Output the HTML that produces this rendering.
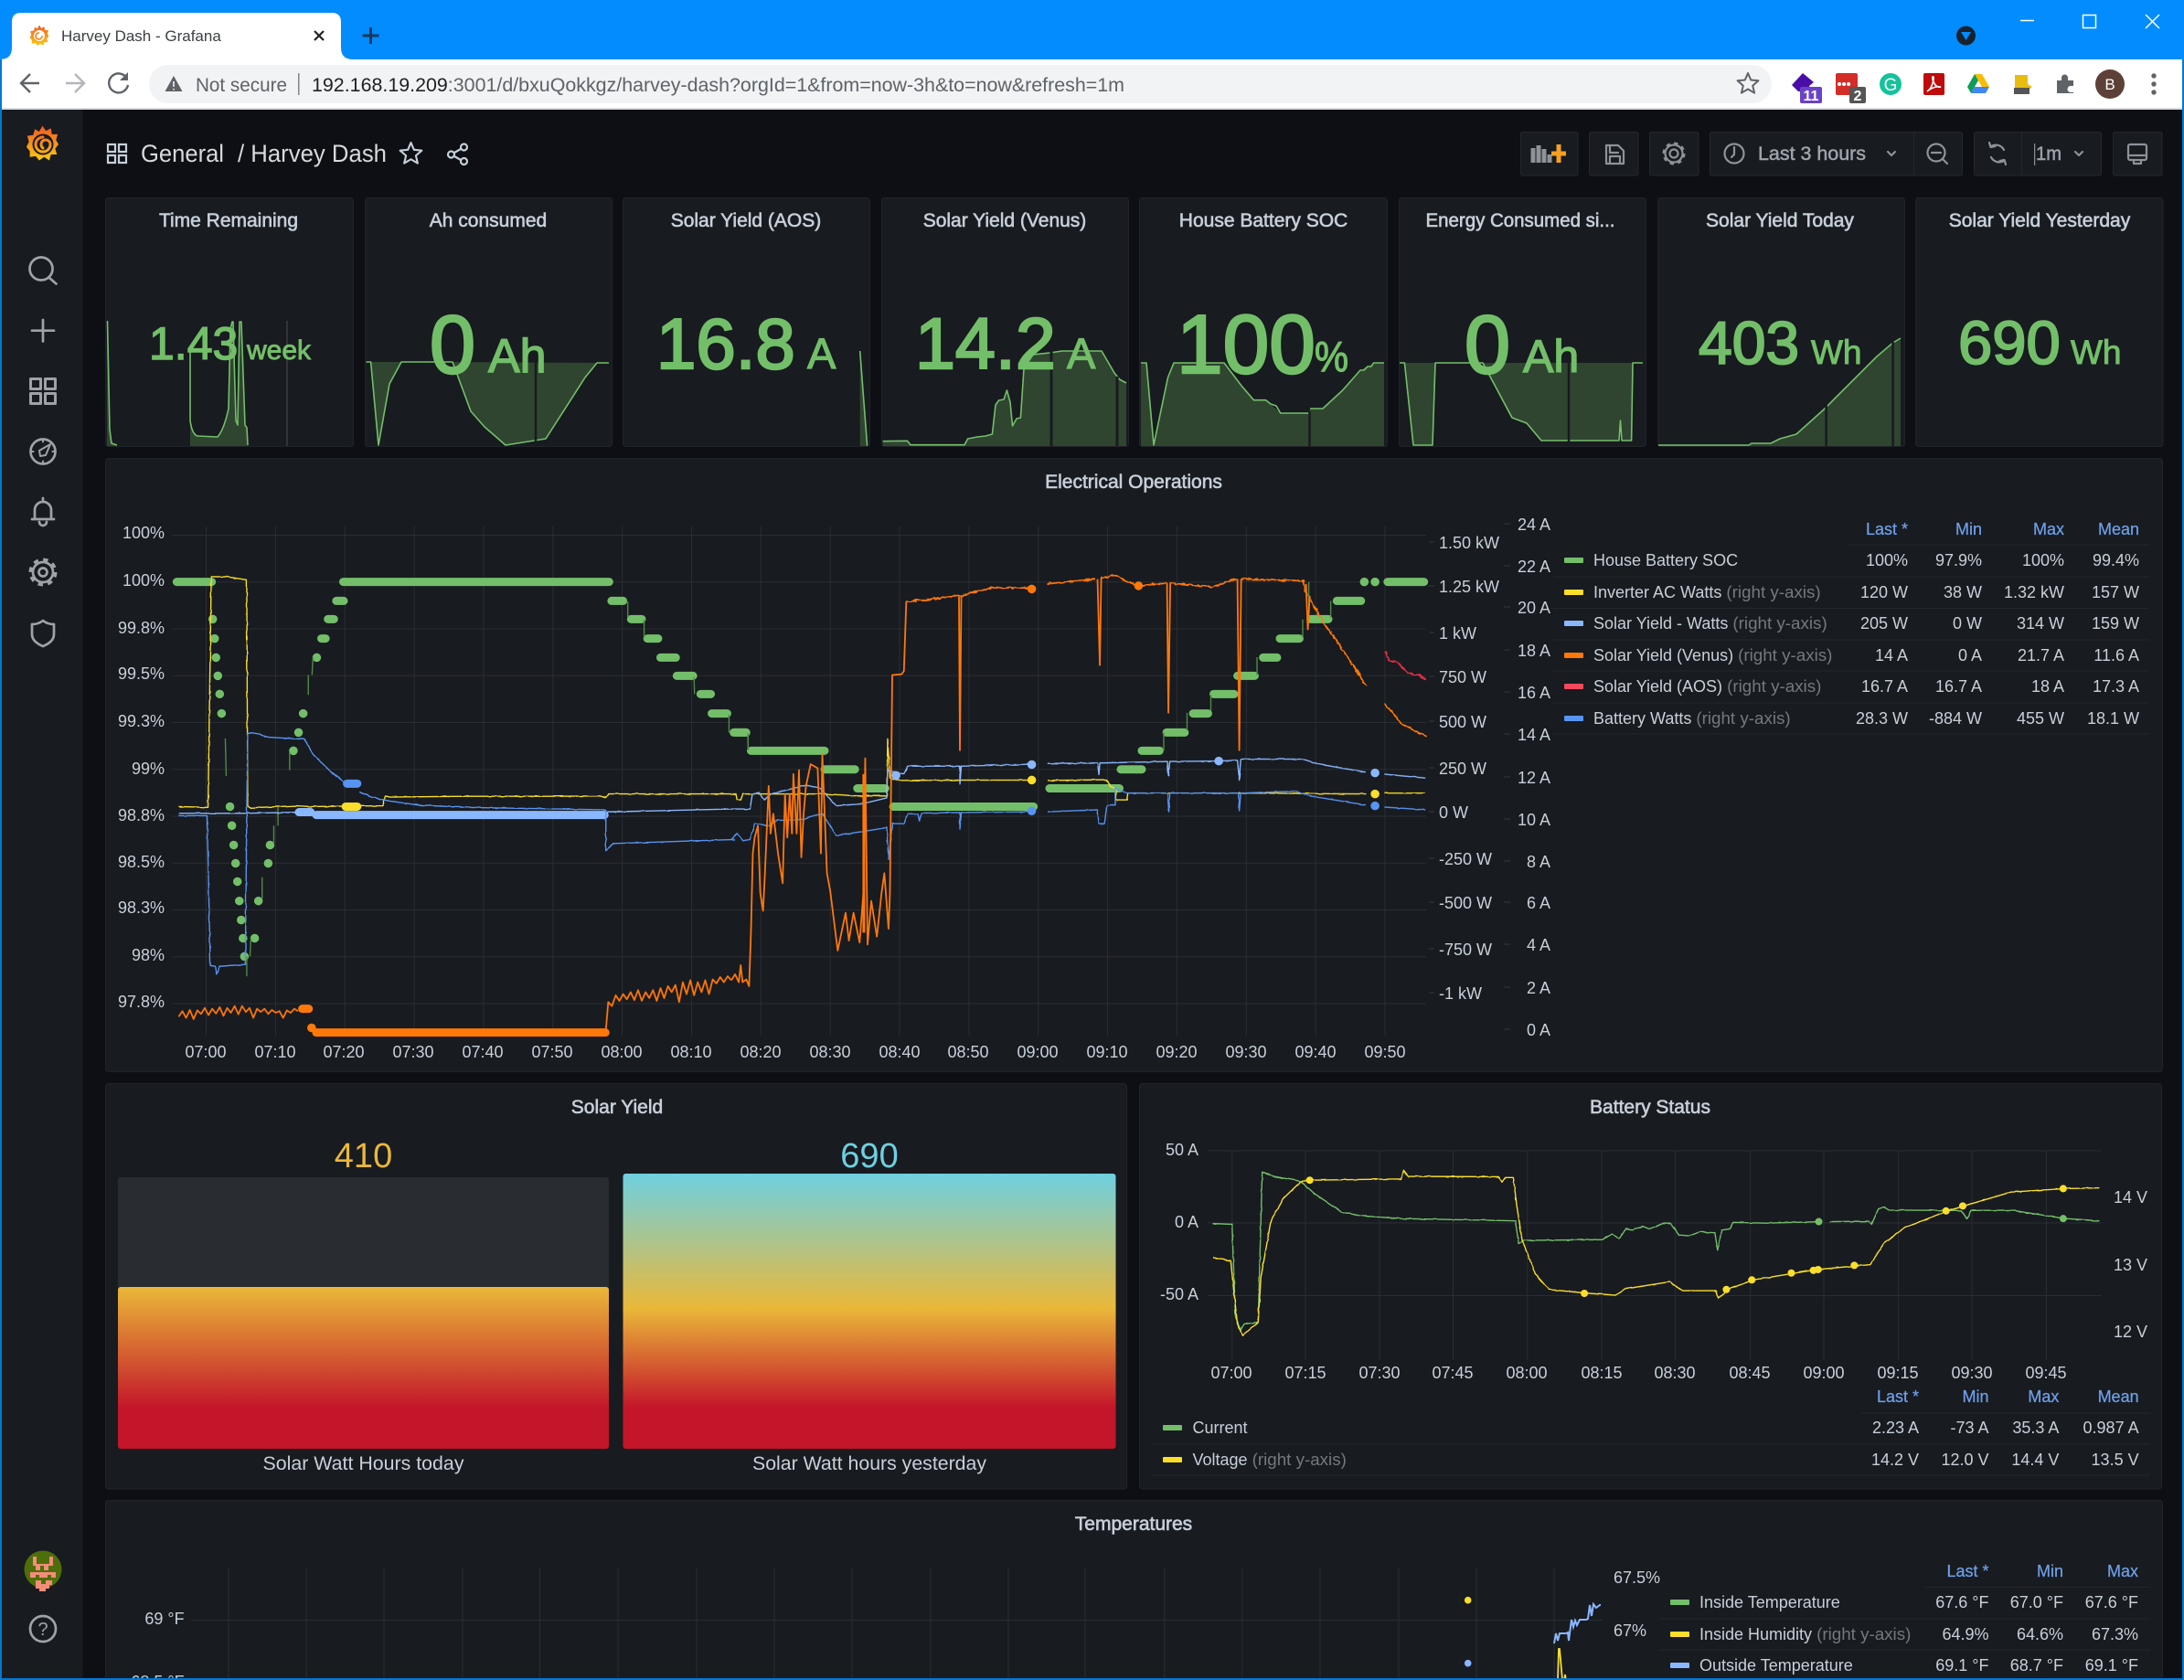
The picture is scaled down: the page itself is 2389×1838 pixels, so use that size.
<!DOCTYPE html>
<html><head><meta charset="utf-8"><title>Harvey Dash - Grafana</title>
<style>
html,body{margin:0;padding:0;background:#0d0f14;overflow:hidden}
svg{display:block;font-family:"Liberation Sans",sans-serif}
text{fill:#c7d0d9;font-size:18px}
.t{font-size:21px;text-anchor:middle;stroke:#c7d0d9;stroke-width:.6px}
.e{text-anchor:end}.m{text-anchor:middle}
.h{fill:#6e9fe8;text-anchor:end;font-size:18px;stroke:#6e9fe8;stroke-width:.25px}
.g{fill:#73797f;font-size:18.8px}
.s{fill:#73bf69;stroke:#73bf69}
.p{fill:#181b20;stroke:#202328;stroke-width:1}
.n{vector-effect:non-scaling-stroke;fill:none;stroke-linejoin:round;stroke-width:1.4}
.o{vector-effect:non-scaling-stroke;fill:none;stroke-linejoin:round;stroke-width:1.8}
.b{vector-effect:non-scaling-stroke;fill:none;stroke-linecap:round;stroke-width:9}
.d{vector-effect:non-scaling-stroke;fill:none;stroke-linecap:round;stroke-width:9.5}
.sp{fill:none;stroke:#73bf69;stroke-width:1.6;stroke-linejoin:round}
.fa{fill:#2f4530;stroke:none}
.ic{fill:none;stroke:#9fa3a9;stroke-width:2.7;stroke-linecap:round;stroke-linejoin:round}
.tb{fill:none;stroke:#8e9299;stroke-width:2.2;stroke-linecap:round;stroke-linejoin:round}
.bt{fill:#181b20;stroke:#24272c;stroke-width:1}
</style></head><body>
<svg width="2389" height="1838" viewBox="0 0 2389 1838" xmlns="http://www.w3.org/2000/svg">
<defs>
<linearGradient id="lg" x1="0" y1="0" x2="0" y2="1"><stop offset="0" stop-color="#f05a28"/><stop offset="1" stop-color="#fbca0a"/></linearGradient>
<linearGradient id="g1" gradientUnits="userSpaceOnUse" x1="0" y1="1408" x2="0" y2="1585"><stop offset="0" stop-color="#eab839"/><stop offset=".75" stop-color="#c4162a"/><stop offset="1" stop-color="#c4162a"/></linearGradient>
<linearGradient id="g2" gradientUnits="userSpaceOnUse" x1="0" y1="1284" x2="0" y2="1585"><stop offset="0" stop-color="#6ed0e0"/><stop offset=".49" stop-color="#eab839"/><stop offset=".85" stop-color="#c4162a"/><stop offset="1" stop-color="#c4162a"/></linearGradient>
<linearGradient id="lg2" gradientUnits="userSpaceOnUse" x1="0" y1="140" x2="0" y2="176"><stop offset="0" stop-color="#f05a28"/><stop offset="1" stop-color="#fbca0a"/></linearGradient>
<filter id="j" filterUnits="userSpaceOnUse" x="0" y="0" width="2389" height="1838" color-interpolation-filters="sRGB"><feTurbulence type="fractalNoise" baseFrequency=".2" numOctaves="2" seed="3" result="r"/><feDisplacementMap in="SourceGraphic" in2="r" scale="4" xChannelSelector="R" yChannelSelector="G"/></filter>
<filter id="k" filterUnits="userSpaceOnUse" x="0" y="0" width="2389" height="1838" color-interpolation-filters="sRGB"><feTurbulence type="fractalNoise" baseFrequency=".15" numOctaves="1" seed="8" result="r"/><feDisplacementMap in="SourceGraphic" in2="r" scale="2" xChannelSelector="R" yChannelSelector="G"/></filter>
<symbol id="logo" viewBox="-20 -22 40 44" overflow="visible">
<path fill="url(#lg)" d="M0-21 L4-15 L10-18 L11-11 L18-11 L16-4 L19 1 L15 6 L17 13 L10 13 L8 20 L2 16 L-4 20 L-8 15 L-15 16 L-15 9 L-19 4 L-16-2 L-18-9 L-11-10 L-9-17 L-4-14Z"/>
</symbol>
<symbol id="star" viewBox="-13 -13 26 26"><polygon points="0,-12 3.2,-4.5 11.4,-3.7 5.2,1.7 7.1,9.7 0,5.5 -7.1,9.7 -5.2,1.7 -11.4,-3.7 -3.2,-4.5" fill="none" stroke="currentColor" stroke-width="2" stroke-linejoin="round"/></symbol>
</defs>

<rect width="2389" height="1838" fill="#0d0f14"/>

<!-- browser chrome -->
<rect width="2389" height="65" fill="#028cfe"/>
<rect y="65" width="2389" height="55" fill="#fff"/>
<rect y="118" width="2389" height="2" fill="#d8dadd"/>
<path d="M0 65Q13 65 13 52V24Q13 14 23 14H363Q373 14 373 24V52Q373 65 386 65Z" fill="#fff"/>
<use href="#logo" x="32" y="27" width="22" height="24"/>
<circle cx="43" cy="39" r="6" fill="#fff"/><path d="M43 36a3.500 3.500 0 1 0 3 3" fill="none" stroke="#f58220" stroke-width="1.600"/>
<text x="67" y="45" style="font-size:17px;fill:#3c4043">Harvey Dash - Grafana</text>
<path d="M344 34l10 10M354 34l-10 10" stroke="#202124" stroke-width="2.2" fill="none"/>
<path d="M405.500 30v18M396.500 39h18" stroke="#17375a" stroke-width="3" fill="none"/>
<circle cx="2150.500" cy="39" r="10.500" fill="#17222f"/><path d="M2145 35h11l-5.500 9z" fill="#028cfe"/>
<path d="M2210 22.500h15" stroke="#fff" stroke-width="1.500"/>
<rect x="2278.500" y="16.500" width="14" height="14" fill="none" stroke="#fff" stroke-width="1.500"/>
<path d="M2347 16l15 15M2362 16l-15 15" stroke="#fff" stroke-width="1.500"/>

<path d="M43 91H24M33 81l-10 10l10 10" fill="none" stroke="#5f6368" stroke-width="2.400"/>
<path d="M72 91h19M82 81l10 10l-10 10" fill="none" stroke="#b3b6ba" stroke-width="2.400"/>
<path d="M139 86a10.500 10.500 0 1 0 1 7" fill="none" stroke="#5f6368" stroke-width="2.400"/><path d="M140 79v9h-9z" fill="#5f6368"/>
<rect x="163" y="71" width="1775" height="42" rx="21" fill="#f1f3f4"/>
<path d="M190 83l9.500 17h-19z" fill="#5f6368"/><path d="M190 89v6M190 97v1.500" stroke="#f1f3f4" stroke-width="1.600"/>
<text x="214" y="100" textLength="100" lengthAdjust="spacingAndGlyphs" style="font-size:21px;fill:#5f6368">Not secure</text>
<rect x="326" y="80" width="1.500" height="24" fill="#80868b"/>
<text x="341" y="100" textLength="889" lengthAdjust="spacingAndGlyphs" style="font-size:21px;fill:#5f6368"><tspan style="fill:#202124">192.168.19.209</tspan>:3001/d/bxuQokkgz/harvey-dash?orgId=1&amp;from=now-3h&amp;to=now&amp;refresh=1m</text>
<use href="#star" x="1899" y="79" width="26" height="26" style="color:#5f6368"/>

<!-- extensions -->
<path d="M1972 80l12 10l-5 4l2 6h-14l-7-7z" fill="#4a0ea8"/>
<rect x="1969" y="95" width="24" height="18" rx="2" fill="#6a42c8"/><text x="1981" y="110" class="m" style="font-size:16px;fill:#fff;font-weight:bold">11</text>
<rect x="2008" y="80" width="24" height="24" rx="2" fill="#d32d27"/><path d="M2012 92h.1M2017 92h.1M2022 92h.1" stroke="#fff" stroke-width="4" stroke-linecap="round"/>
<rect x="2023" y="95" width="18" height="18" rx="2" fill="#555"/><text x="2032" y="110" class="m" style="font-size:16px;fill:#fff;font-weight:bold">2</text>
<circle cx="2068" cy="92" r="12" fill="#15c39a"/><text x="2068" y="99" class="m" style="font-size:19px;fill:#fff">G</text>
<rect x="2104" y="80" width="23" height="24" rx="2" fill="#c00b0b"/><path d="M2108 100q5-3 7-13q.5-4-1-3q-1 3 3 9q3 3 6 2q-8-1-15 5z" fill="none" stroke="#fff" stroke-width="1.600"/>
<path d="M2160 81h8l8 14h-8z" fill="#fbbc04"/><path d="M2160 81l-8 14l4 7l8-14z" fill="#0f9d58"/><path d="M2156 102h16l4-7h-16z" fill="#4285f4"/>
<path d="M2204 82h14v10l5 3l-8 6h-12l1-6z" fill="#e8bd10"/><rect x="2203" y="96" width="17" height="7" fill="#555"/>
<path d="M2250 88h5v-3a3.500 3.500 0 0 1 7 0v3h6v6h-3a3.500 3.500 0 0 0 0 7h3v1h-18z" fill="#5f6368"/>
<circle cx="2308" cy="92" r="16" fill="#5d4037"/><text x="2308" y="98" class="m" style="font-size:17px;fill:#fff">B</text>
<circle cx="2356" cy="83" r="2.700" fill="#5f6368"/><circle cx="2356" cy="92" r="2.700" fill="#5f6368"/><circle cx="2356" cy="101" r="2.700" fill="#5f6368"/>

<!-- sidebar -->
<rect x="2" y="120" width="88.500" height="1718" fill="#181b20"/>
<use href="#logo" x="28" y="136" width="37" height="42"/>
<circle cx="47" cy="158" r="11.500" fill="#181b20"/>
<path d="M47 150a8 8 0 1 0 8 8a5 5 0 1 0-8 4" fill="none" stroke="url(#lg2)" stroke-width="3" stroke-linecap="round"/>
<g class="ic">
<circle cx="45" cy="294" r="12.500"/><path d="M54 304l7.500 6.500"/>
<path d="M35 361.700h24M47 350v23.500"/>
<path style="stroke-width:3" d="M33.500 414.500h11v11h-11zM49.500 414.500h11v11h-11zM33.500 430.500h11v11h-11zM49.500 430.500h11v11h-11z"/>
<circle cx="47" cy="494" r="13.500"/><path d="M55 486l-5 12l-6 1l-1-6z" style="stroke-width:2"/><path d="M47 480.500v3M47 504.500v3M33.500 494h3M57.500 494h3" style="stroke-width:2"/>
<path d="M47 545v3M38 566v-8a9 9 0 0 1 18 0v8M35 568h24M43 571a4 4 0 0 0 8 0"/>
<circle cx="47" cy="626" r="4.500"/><circle cx="47" cy="626" r="11"/>
<circle cx="47" cy="626" r="13.500" stroke-dasharray="5.300 5.300" style="stroke-width:4;stroke-linecap:butt"/>
<path d="M35 683Q42 683 47 679Q52 683 59 683V694Q59 702 47 707Q35 702 35 694Z"/>
<circle cx="47" cy="1782" r="14"/>
</g>
<text x="47" y="1789" class="m" style="font-size:20px;fill:#9fa3a9">?</text>
<circle cx="47" cy="1717" r="20.500" fill="#4e6e0a"/>
<path fill="#f28d7a" d="M36 1703h4v8h14v-8h4v10h-5v5h-5v-5h-4v5h-5v-5h-3zM33 1720h28v6h-5v-3h-4v3h-9v-3h-4v3h-6zM39 1729h6v4h5v-4h7v5h-3v4h-4v3h-7v-3h-4z"/>

<!-- dashboard header -->
<path d="M118 158h8v8h-8zM130 158h8v8h-8zM118 170h8v8h-8zM130 170h8v8h-8z" fill="none" stroke="#c7d0d9" stroke-width="2.200"/>
<text x="154" y="177" textLength="91" lengthAdjust="spacingAndGlyphs" style="font-size:27px;fill:#d8d9da">General</text>
<text x="260" y="177" textLength="163" lengthAdjust="spacingAndGlyphs" style="font-size:27px;fill:#d8d9da">/ Harvey Dash</text>
<use href="#star" x="436" y="155" width="27" height="27" style="color:#c7d0d9"/>
<g fill="none" stroke="#c7d0d9" stroke-width="2.200"><circle cx="493.500" cy="169" r="3.500"/><circle cx="507.500" cy="161" r="3.500"/><circle cx="507.500" cy="176.500" r="3.500"/><path d="M497 167l7-4M497 171l7 4"/></g>

<rect class="bt" x="1663.500" y="144.500" width="62.500" height="47.500" rx="2"/>
<rect class="bt" x="1738.500" y="144.500" width="53.500" height="47.500" rx="2"/>
<rect class="bt" x="1804.500" y="144.500" width="53.500" height="47.500" rx="2"/>
<rect class="bt" x="1870.500" y="144.500" width="276" height="47.500" rx="2"/><path d="M2093.500 145v47" stroke="#24272c"/>
<rect class="bt" x="2159.500" y="144.500" width="139" height="47.500" rx="2"/><path d="M2211.500 145v47" stroke="#24272c"/>
<rect class="bt" x="2311.500" y="144.500" width="53.500" height="47.500" rx="2"/>
<path d="M1677 178v-16M1683 178v-19M1689 178v-15M1695 178v-9" stroke="#8e9299" stroke-width="5"/>
<path d="M1705 158v20M1697 168h16" stroke="#f5a020" stroke-width="5"/>
<path class="tb" d="M1757 159h13l6 6v14h-19zM1761 159v8h9M1761 179v-8h11v8"/>
<circle class="tb" cx="1831" cy="168" r="4.500"/><circle class="tb" cx="1831" cy="168" r="9.500"/><circle class="tb" cx="1831" cy="168" r="11" stroke-dasharray="4.300 4.300" style="stroke-width:3;stroke-linecap:butt"/>
<circle class="tb" cx="1897" cy="168" r="10.500"/><path class="tb" d="M1897 161v8l-3 3"/>
<text x="1923" y="175" textLength="118" lengthAdjust="spacingAndGlyphs" style="font-size:21px;fill:#9ea3ab;stroke:#9ea3ab;stroke-width:.5px">Last 3 hours</text>
<path class="tb" d="M2065 166l4 4l4-4"/>
<circle class="tb" cx="2118" cy="167" r="9.500"/><path class="tb" d="M2113 167h10M2125 174l5 5"/>
<path class="tb" d="M2178 160a10 10 0 0 1 14 4M2192 176a10 10 0 0 1-14-4M2176 156l1.500 5l5-1M2194 180l-1.500-5l-5 1"/>
<path d="M2225.700 157v24" stroke="#aaa"/>
<text x="2227" y="175" textLength="28" lengthAdjust="spacingAndGlyphs" style="font-size:21px;fill:#9ea3ab;stroke:#9ea3ab;stroke-width:.5px">1m</text>
<path class="tb" d="M2270 166l4 4l4-4"/>
<rect class="tb" x="2328" y="158" width="20" height="17" rx="2"/><path class="tb" d="M2328 170h20M2334 175v4h8v-4"/>

<!-- stat panels -->
<rect class="p" x="115.500" y="216.500" width="271" height="272" rx="3"/>
<rect class="p" x="399.500" y="216.500" width="270" height="272" rx="3"/>
<rect class="p" x="681.500" y="216.500" width="270" height="272" rx="3"/>
<rect class="p" x="964.500" y="216.500" width="270" height="272" rx="3"/>
<rect class="p" x="1246.500" y="216.500" width="271" height="272" rx="3"/>
<rect class="p" x="1530.500" y="216.500" width="270" height="272" rx="3"/>
<rect class="p" x="1813.500" y="216.500" width="270" height="272" rx="3"/>
<rect class="p" x="2095.500" y="216.500" width="270.500" height="272" rx="3"/>
<text class="t" x="250" y="248">Time Remaining</text>
<text class="t" x="534" y="248">Ah consumed</text>
<text class="t" x="816" y="248">Solar Yield (AOS)</text>
<text class="t" x="1099" y="248">Solar Yield (Venus)</text>
<text class="t" x="1382" y="248">House Battery SOC</text>
<text class="t" x="1663" y="248" textLength="207" lengthAdjust="spacingAndGlyphs">Energy Consumed si...</text>
<text class="t" x="1947" y="248">Solar Yield Today</text>
<text class="t" x="2231" y="248">Solar Yield Yesterday</text>

<!-- sparklines -->
<path class="fa" d="M117 351L120 470L122 485L128 487V488H117ZM208 383V460Q210 475 216 477L238 478Q245 470 250 447L252 360L254 352L255 352L258 460L260 465L262 352L264 352L268 465L270 468L271 488H208Z"/>
<path class="sp" d="M117.500 351L120 470L122 485L128 487M208 383V460Q210 475 216 477L238 478Q245 470 250 447L252 360L254 352L255 352L258 460L260 465L262 352L264 352L268 465L270 468L271 487"/>
<path d="M314 351V488" stroke="#3a3d42" stroke-width="1.500"/>

<path class="fa" d="M405.600 396L414 487L426 420L439 396ZM495 396L515 450L530 467L553 487L597 480L640 413L653 397Z"/>
<path class="sp" d="M400.500 396H405.600L414 487L426 420L439 396H495L515 450L530 467L553 487L597 480L640 413L653 397H666"/>
<path d="M586 396V488" stroke="#181b20" stroke-width="2.500"/>

<path class="fa" d="M940.700 384L948.600 488H940.700Z"/><path class="sp" d="M940.700 384L948.600 487.700"/>

<path class="fa" d="M965.700 482.700L992.500 482.300L996 486.700H1055L1058.600 480L1069 478L1078 477L1085.400 475L1089 443L1092.500 438L1098 437L1101.400 427L1105 440L1107.500 466L1112 458L1116.400 457L1120 403L1130 388L1148 386L1162 384H1205L1219 408L1224.600 415L1232 419V488H965.700Z"/>
<path class="sp" d="M965.700 482.700L992.500 482.300L996 486.700H1055L1058.600 480L1069 478L1078 477L1085.400 475L1089 443L1092.500 438L1098 437L1101.400 427L1105 440L1107.500 466L1112 458L1116.400 457L1120 403L1130 388L1148 386L1162 384H1205L1219 408L1224.600 415L1232 419"/>
<path d="M1150 384V488M1222 412V488" stroke="#181b20" stroke-width="3"/>

<path class="fa" d="M1248 397H1254L1262 487L1277.500 413L1284 397H1339L1358 422L1371.400 437.700H1384.600L1400.700 452H1432L1433 447H1447L1468.600 427L1488 405L1502.500 397H1514V488H1248Z"/>
<path class="sp" d="M1248 397H1254L1262 487L1277.500 413L1284 397H1339L1358 422L1371.400 437.700H1384.600L1390 442L1396 444L1400.700 452H1432M1433 447H1447L1468.600 427L1488 405L1492 405L1496 401L1500 401L1502.500 397H1514"/>
<path d="M1432.500 450V488" stroke="#181b20" stroke-width="2.500"/>

<path class="fa" d="M1536.400 397L1546 487H1567L1570 397ZM1622 397L1654 457L1670 463L1686 482H1771L1772.500 460L1774 482H1784.600L1786 397Z"/>
<path class="sp" d="M1531 397H1536.400L1546 487H1567L1570 397H1622L1654 457L1670 463L1686 482H1771L1772.500 460L1774 482H1784.600L1786 397H1797"/>
<path d="M1716 397V488" stroke="#181b20" stroke-width="2.500"/>

<path class="fa" d="M1814 487H1913L1916 485H1937L1947 480L1965 475L1995 448L2000 443L2053 390L2070.600 375L2079 370V488H1814Z"/>
<path class="sp" d="M1814 487H1913L1916 485H1937L1947 480L1965 475L1995 448L2000 443L2053 390L2070.600 375L2079 370"/>
<path d="M1997.600 440V488M2070.600 374V488" stroke="#181b20" stroke-width="2.500"/>

<!-- stat values -->
<text class="s" x="163" y="393" style="font-size:50px;stroke-width:1.400px">1.43</text>
<text class="s" x="270" y="393" style="font-size:30px;stroke-width:.9px">week</text>
<text class="s" x="470" y="408" style="font-size:90px;stroke-width:2.500px">0</text>
<text class="s" x="534" y="407" style="font-size:52px;stroke-width:1.400px">Ah</text>
<text class="s" x="718" y="403" style="font-size:78px;stroke-width:2.400px">16.8</text>
<text class="s" x="883" y="403" style="font-size:47px;stroke-width:1.200px">A</text>
<text class="s" x="1001" y="403" style="font-size:79px;stroke-width:2.400px">14.2</text>
<text class="s" x="1167" y="403" style="font-size:47px;stroke-width:1.200px">A</text>
<text class="s" x="1287" y="408" style="font-size:91px;stroke-width:2.500px">100</text>
<text class="s" x="1438" y="406" textLength="37" lengthAdjust="spacingAndGlyphs" style="font-size:46px;stroke-width:1.200px">%</text>
<text class="s" x="1602" y="408" style="font-size:90px;stroke-width:2.500px">0</text>
<text class="s" x="1666" y="407" style="font-size:50px;stroke-width:1.400px">Ah</text>
<text class="s" x="1858" y="398" style="font-size:66px;stroke-width:2px">403</text>
<text class="s" x="1981" y="398" style="font-size:37px;stroke-width:1px">Wh</text>
<text class="s" x="2142" y="398" style="font-size:67px;stroke-width:2px">690</text>
<text class="s" x="2265" y="398" style="font-size:37px;stroke-width:1px">Wh</text>

<!-- Electrical Operations -->
<rect class="p" x="115.500" y="501.500" width="2250" height="671" rx="3"/>
<text class="t" x="1240" y="534">Electrical Operations</text>
<path stroke="#2a2d32" fill="none" d="M225.500 576V1133M301.400 576V1133M377.200 576V1133M453.100 576V1133M528.900 576V1133M604.800 576V1133M680.600 576V1133M756.500 576V1133M832.300 576V1133M908.200 576V1133M984 576V1133M1059.900 576V1133M1135.700 576V1133M1211.600 576V1133M1287.400 576V1133M1363.300 576V1133M1439.100 576V1133M1515 576V1133M188 585.500H1560M188 636.700H1560M188 688H1560M188 739.200H1560M188 790.500H1560M188 841.800H1560M188 893H1560M188 944.200H1560M188 995.500H1560M188 1046.800H1560M188 1098H1560"/>
<path stroke="#34373c" fill="none" d="M1563 593h6M1563 641h6M1563 692h6M1563 740h6M1563 789h6M1563 840h6M1563 888h6M1563 939h6M1563 987h6M1563 1038h6M1563 1086h6M1645 573h7M1645 619h7M1645 664h7M1645 711h7M1645 757h7M1645 803h7M1645 850h7M1645 896h7M1645 942h7M1645 987h7M1645 1033h7M1645 1080h7M1645 1126h7"/>
<g class="e">
<text x="180" y="589" class="e">100%</text><text x="180" y="641" class="e">100%</text><text x="180" y="693" class="e">99.8%</text><text x="180" y="743" class="e">99.5%</text><text x="180" y="795" class="e">99.3%</text><text x="180" y="847" class="e">99%</text><text x="180" y="898" class="e">98.8%</text><text x="180" y="949" class="e">98.5%</text><text x="180" y="999" class="e">98.3%</text><text x="180" y="1051" class="e">98%</text><text x="180" y="1102" class="e">97.8%</text>
</g>
<text x="1574" y="600">1.50 kW</text><text x="1574" y="648">1.25 kW</text><text x="1574" y="699">1 kW</text><text x="1574" y="747">750 W</text><text x="1574" y="796">500 W</text><text x="1574" y="847">250 W</text><text x="1574" y="895">0 W</text><text x="1574" y="946">-250 W</text><text x="1574" y="994">-500 W</text><text x="1574" y="1045">-750 W</text><text x="1574" y="1093">-1 kW</text>
<text x="1696" y="580" class="e">24 A</text><text x="1696" y="626" class="e">22 A</text><text x="1696" y="671" class="e">20 A</text><text x="1696" y="718" class="e">18 A</text><text x="1696" y="764" class="e">16 A</text><text x="1696" y="810" class="e">14 A</text><text x="1696" y="857" class="e">12 A</text><text x="1696" y="903" class="e">10 A</text><text x="1696" y="949" class="e">8 A</text><text x="1696" y="994" class="e">6 A</text><text x="1696" y="1040" class="e">4 A</text><text x="1696" y="1087" class="e">2 A</text><text x="1696" y="1133" class="e">0 A</text>
<g class="m">
<text class="m" x="225" y="1157">07:00</text><text class="m" x="301" y="1157">07:10</text><text class="m" x="376" y="1157">07:20</text><text class="m" x="452" y="1157">07:30</text><text class="m" x="528" y="1157">07:40</text><text class="m" x="604" y="1157">07:50</text><text class="m" x="680" y="1157">08:00</text><text class="m" x="756" y="1157">08:10</text><text class="m" x="832" y="1157">08:20</text><text class="m" x="908" y="1157">08:30</text><text class="m" x="984" y="1157">08:40</text><text class="m" x="1059" y="1157">08:50</text><text class="m" x="1135" y="1157">09:00</text><text class="m" x="1211" y="1157">09:10</text><text class="m" x="1287" y="1157">09:20</text><text class="m" x="1363" y="1157">09:30</text><text class="m" x="1439" y="1157">09:40</text><text class="m" x="1515" y="1157">09:50</text>
</g>

<!-- left part of chart, zoom-coordinates -->
<g transform="translate(100,500) scale(.5102,.43365)">
<path class="b" stroke="#73bf69" d="M183 315H258M540 315H1110M525 363H541M1115 363H1140M507 409H520M1157 409H1180M493 458H502M1192 458H1215M1220 506H1253M1255 552H1290M1306 598H1328M1330 647H1363M1380 695H1403"/>
<path class="d" stroke="#73bf69" d="M260 409h.1M264 458h.1M267 506h.1M483 506h.1M271 552h.1M275 598h.1M279 647h.1M454 647h.1M444 695h.1M433 741h.1M297 882h.1M301 930h.1M305 979h.1M383 979h.1M309 1025h.1M379 1025h.1M313 1071h.1M317 1120h.1M358 1120h.1M321 1168h.1M325 1214h.1M350 1214h.1M328 1260h.1"/>
<path class="n" stroke="#4f8a47" d="M287 710L289 805M333 1310V1260M340 1260L342 1215M366 1060V1115M391 930V975M400 880V930M425 745V790M465 550V600M475 505L473 550M1150 365V405M1185 410V455M1292 555L1293 598M1367 650V695M1407 697L1408 740"/>
<path class="b" stroke="#fade2a" d="M545 882H570"/>
<path class="b" stroke="#8ab8ff" d="M445 896H470M482 903H1100"/>
<path class="b" stroke="#5794f2" d="M548 824H570"/>
<path class="b" stroke="#ff780a" d="M452 1392H466M482 1452H1102"/>
<path class="d" stroke="#ff780a" d="M472 1440h.1"/>
</g>
<g transform="translate(800,500) scale(.5102,.43365)">
<path class="b" stroke="#73bf69" d="M5 695H32M933 695H972M42 741H200M880 741H918M200 788H265M835 788H880M270 836H330M682 836H832M347 882H648M990 647H1022M1034 598H1078M1085 552H1122M1140 506H1170M1176 458H1218M1242 409H1280M1298 363H1350M1407 315H1485"/>
<path class="d" stroke="#73bf69" d="M1357 315h.1M1380 315h.1"/>
<path class="n" stroke="#4f8a47" d="M36 697V740M927 695V740M977 645V690M1028 600V640M1127 505V550M1225 410V455M1238 315V405M1285 363V405"/>
</g>
<!-- noisy fine lines -->
<g filter="url(#k)">
<g transform="translate(100,500) scale(.5102,.43365)">
<path class="n" stroke="#fade2a" d="M187 882L250 884L257 302L290 302L333 310L335 880L340 885L440 880L470 882L625 880L630 855L640 858L800 856L1000 856L1090 855L1103 860L1108 850L1372 850"/>
<path class="n" stroke="#8ab8ff" d="M187 899L330 899L445 896M1103 895L1120 895L1372 888"/>
<path class="n" stroke="#5794f2" d="M187 905L248 905L255 1283L265 1285L268 1305L275 1285L330 1280L333 900L335 697L345 697L360 700L380 707L457 712L475 750L510 790L545 823M575 845L600 858L640 868L700 878L800 884L900 886L1103 890L1103 992L1120 975L1380 965"/>
</g>
<g transform="translate(800,500) scale(.5102,.43365)">
<path class="n" stroke="#fade2a" d="M0 850H10L12 865H20L25 850H200L270 855H333L335 712L340 810L360 816L520 815L640 815M678 816L805 814L812 830L825 838V865H848L850 848L1120 848L1360 850M1400 848L1487 848"/>
<path class="n" stroke="#8ab8ff" d="M0 888H40L45 850L60 848L70 865L85 850L160 828L190 835L225 880L280 875L333 860L335 790L370 800L378 780H490V825L493 780L640 775M678 773L785 772L788 800L790 772L935 768L937 805L940 768L1045 767L1085 765L1089 815L1092 762H1225L1260 775L1360 795M1400 800L1488 810"/>
<path class="n" stroke="#5794f2" d="M0 965L12 950L25 968L40 965L50 925L80 930L100 915H150L175 905L195 900L225 955L280 945L333 935L337 1015L345 925H370L378 900H400L403 918L408 898L490 897V940L493 897L640 895M678 895L785 890L788 925H800L805 880L823 878V835L848 848H935L938 895L940 848H1087L1089 892L1092 848L1210 843L1240 855L1360 878M1400 883L1488 890"/>
</g>
</g>
<!-- orange: zigzag runs and spikes unfiltered -->
<g transform="translate(100,500) scale(.5102,.43365)">
<path class="o" stroke="#ff780a" d="M187 1412L195 1398L203 1415L211 1395L219 1418L227 1396L235 1405L243 1390L251 1408L259 1392L267 1404L275 1388L283 1410L291 1390L299 1402L307 1385L315 1406L323 1385L331 1400L339 1390L347 1415L355 1392L363 1400L371 1392L379 1405L387 1395L395 1402L403 1398L411 1415L419 1396L427 1402L435 1392L443 1398M1103 1445L1108 1375L1116 1385L1124 1358L1132 1372L1140 1355L1148 1368L1156 1350L1164 1370L1172 1345L1180 1372L1188 1350L1196 1365L1204 1345L1212 1372L1220 1340L1228 1365L1236 1335L1244 1350L1252 1332L1260 1375L1268 1325L1276 1355L1284 1320L1292 1358L1300 1325L1308 1350L1316 1320L1324 1355L1332 1318L1340 1328L1348 1312L1356 1325L1364 1310L1372 1320"/>
</g>
<g transform="translate(800,500) scale(.5102,.43365)">
<path class="o" stroke="#ff780a" d="M0 1320L8 1305L16 1325L20 1282L24 1325L32 1318L38 1335L42 1200L46 1000L50 960L57 930L62 1100L68 1145L72 1050L80 830L84 950L90 900L100 1000L110 1075L115 850L120 960L125 850L130 950L133 800L140 950L145 790L150 1010L155 900L160 830L170 775L185 785L192 1000L195 750L205 1050L212 1095L228 1245L245 1150L252 1220L262 1150L275 1225L283 1100L287 760L292 1230L300 1120L312 1210L322 1100L328 1050L337 1190L340 1100L345 550L365 548L370 540L375 365"/>
<path class="o" stroke="#ff780a" style="stroke-width:3" d="M284 800V1200"/>
<path class="o" stroke="#ff780a" d="M488 352L490 740L493 350M785 308L790 525L793 305M934 318L937 645L941 318M1085 310L1089 740L1093 308M1232 320L1236 435L1240 350"/>
</g>
<g filter="url(#j)">
<g transform="translate(800,500) scale(.5102,.43365)">
<path class="o" stroke="#ff780a" d="M375 365L490 350L560 330L640 330M678 320L780 308M793 305L820 298L870 325L935 318M941 318L1030 328L1080 308L1087 310M1093 308L1225 312L1235 350M1240 355L1270 420L1290 450L1330 520L1362 578M1400 622L1440 675L1490 705"/>
<path class="o" stroke="#e02f44" d="M1402 492L1410 512L1430 520L1450 545L1475 550L1488 562"/>
</g>
</g>
<g transform="translate(800,500) scale(.5102,.43365)">
<path class="d" stroke="#ff780a" d="M644 333h.1M873 325h.1"/>
<path class="d" stroke="#fade2a" d="M644 815h.1M1380 850h.1"/>
<path class="d" stroke="#8ab8ff" d="M644 776h.1M1380 797h.1M353 803h.1M1045 767h.1"/>
<path class="d" stroke="#5794f2" d="M644 893h.1M1380 880h.1"/>
</g>

<!-- Electrical legend -->
<path stroke="#24272c" fill="none" d="M2022 596H2351M1699 631H2351M1699 665.600H2351M1699 700H2351M1699 734H2351M1699 769H2351M1699 803H2351"/>
<text class="h" x="2087" y="585">Last *</text><text class="h" x="2168" y="585">Min</text><text class="h" x="2258" y="585">Max</text><text class="h" x="2340" y="585">Mean</text>
<rect x="1711" y="610" width="21" height="6" rx="1" fill="#73bf69"/><rect x="1711" y="645" width="21" height="6" rx="1" fill="#fade2a"/><rect x="1711" y="679" width="21" height="6" rx="1" fill="#8ab8ff"/><rect x="1711" y="714" width="21" height="6" rx="1" fill="#ff780a"/><rect x="1711" y="748" width="21" height="6" rx="1" fill="#f2495c"/><rect x="1711" y="783" width="21" height="6" rx="1" fill="#5794f2"/>
<text x="1743" y="619">House Battery SOC</text>
<text x="1743" y="654">Inverter AC Watts <tspan class="g">(right y-axis)</tspan></text>
<text x="1743" y="688">Solar Yield - Watts <tspan class="g">(right y-axis)</tspan></text>
<text x="1743" y="723">Solar Yield (Venus) <tspan class="g">(right y-axis)</tspan></text>
<text x="1743" y="757">Solar Yield (AOS) <tspan class="g">(right y-axis)</tspan></text>
<text x="1743" y="792">Battery Watts <tspan class="g">(right y-axis)</tspan></text>
<text x="2087" y="619" class="e">100%</text><text x="2168" y="619" class="e">97.9%</text><text x="2258" y="619" class="e">100%</text><text x="2340" y="619" class="e">99.4%</text>
<text x="2087" y="654" class="e">120 W</text><text x="2168" y="654" class="e">38 W</text><text x="2258" y="654" class="e">1.32 kW</text><text x="2340" y="654" class="e">157 W</text>
<text x="2087" y="688" class="e">205 W</text><text x="2168" y="688" class="e">0 W</text><text x="2258" y="688" class="e">314 W</text><text x="2340" y="688" class="e">159 W</text>
<text x="2087" y="723" class="e">14 A</text><text x="2168" y="723" class="e">0 A</text><text x="2258" y="723" class="e">21.7 A</text><text x="2340" y="723" class="e">11.6 A</text>
<text x="2087" y="757" class="e">16.7 A</text><text x="2168" y="757" class="e">16.7 A</text><text x="2258" y="757" class="e">18 A</text><text x="2340" y="757" class="e">17.3 A</text>
<text x="2087" y="792" class="e">28.3 W</text><text x="2168" y="792" class="e">-884 W</text><text x="2258" y="792" class="e">455 W</text><text x="2340" y="792" class="e">18.1 W</text>

<!-- Solar Yield -->
<rect class="p" x="115.500" y="1185.500" width="1117" height="443.500" rx="3"/>
<text class="t" x="675" y="1218">Solar Yield</text>
<text x="397.500" y="1277" class="m" style="font-size:38px;fill:#eab839">410</text>
<text x="951" y="1277" class="m" style="font-size:38px;fill:#6ed0e0">690</text>
<rect x="129" y="1288" width="537" height="297" rx="3" fill="#292c31"/>
<rect x="129" y="1408" width="537" height="177" rx="3" fill="url(#g1)"/>
<rect x="681.500" y="1284" width="539" height="301" rx="3" fill="url(#g2)"/>
<text x="397.500" y="1608" class="m" textLength="220" lengthAdjust="spacingAndGlyphs" style="font-size:21px">Solar Watt Hours today</text>
<text x="951" y="1608" class="m" textLength="256" lengthAdjust="spacingAndGlyphs" style="font-size:21px">Solar Watt hours yesterday</text>

<!-- Battery Status -->
<rect class="p" x="1246.500" y="1185.500" width="1118" height="443.500" rx="3"/>
<text class="t" x="1805" y="1218">Battery Status</text>
<path stroke="#2a2d32" fill="none" d="M1347.700 1259V1488M1428 1259V1488M1509 1259V1488M1589.500 1259V1488M1670.800 1259V1488M1752 1259V1488M1832.700 1259V1488M1914.700 1259V1488M1995 1259V1488M2076.600 1259V1488M2157 1259V1488M2238.500 1259V1488M1320.600 1259H2298.600M1320.600 1338H2298.600M1320.600 1417.500H2298.600"/>
<text x="1311" y="1264" class="e">50 A</text><text x="1311" y="1343" class="e">0 A</text><text x="1311" y="1422" class="e">-50 A</text>
<text x="2312" y="1316">14 V</text><text x="2312" y="1390">13 V</text><text x="2312" y="1463">12 V</text>
<text class="m" x="1347" y="1508">07:00</text><text class="m" x="1428" y="1508">07:15</text><text class="m" x="1509" y="1508">07:30</text><text class="m" x="1589" y="1508">07:45</text><text class="m" x="1670" y="1508">08:00</text><text class="m" x="1752" y="1508">08:15</text><text class="m" x="1832" y="1508">08:30</text><text class="m" x="1914" y="1508">08:45</text><text class="m" x="1995" y="1508">09:00</text><text class="m" x="2076" y="1508">09:15</text><text class="m" x="2157" y="1508">09:30</text><text class="m" x="2238" y="1508">09:45</text>
<g filter="url(#k)"><g transform="translate(1240,1180) scale(.7326,.41964)">
<path class="n" stroke="#73bf69" d="M118 378L147 380L152 620L160 655L165 640L186 635L192 245L210 255L250 268L270 300L300 335L310 348L340 358L400 365L570 371L575 430L582 422L700 420L715 405L725 418L735 392L745 395L760 385L770 392L790 378L802 378L815 408L830 410L845 400L868 402L872 448L878 395L890 392L895 375L945 377L1025 373M1040 373L1098 372L1102 380L1112 340L1120 335L1128 343L1235 344L1245 365L1250 344L1310 343L1390 365L1400 366L1442 371"/>
<path class="n" stroke="#fade2a" d="M118 467L145 475L150 560L155 640L163 670L186 635L190 520L205 370L225 310L250 268L265 265L385 262L400 262L403 240L410 255L545 256L550 270L555 258L567 258L572 330L580 420L600 510L620 550L680 560L720 565L735 548L800 530L820 553L870 553L873 572L890 548L925 525L1020 498L1100 485L1120 430L1150 390L1215 345L1310 296L1390 287L1442 285"/>
</g></g>
<g transform="translate(1240,1180) scale(.7326,.41964)">
<path class="d" style="stroke-width:8" stroke="#fade2a" d="M263 265h.1M673 560h.1M885 550h.1M923 525h.1M982 507h.1M1015 500h.1M1022 498h.1M1076 487h.1M1213 345h.1M1238 332h.1M1388 287h.1"/>
<path class="d" style="stroke-width:8" stroke="#73bf69" d="M1023 373h.1M1388 365h.1"/>
</g>
<path stroke="#24272c" fill="none" d="M2036 1546H2352M1260.500 1580H2352M1260.500 1614H2352"/>
<text class="h" x="2099" y="1534">Last *</text><text class="h" x="2175.500" y="1534">Min</text><text class="h" x="2252.400" y="1534">Max</text><text class="h" x="2339.600" y="1534">Mean</text>
<rect x="1272" y="1559" width="21" height="6" rx="1" fill="#73bf69"/><rect x="1272" y="1594" width="21" height="6" rx="1" fill="#fade2a"/>
<text x="1304.500" y="1568">Current</text><text x="1304.500" y="1603">Voltage <tspan class="g">(right y-axis)</tspan></text>
<text x="2099" y="1568" class="e">2.23 A</text><text x="2175.500" y="1568" class="e">-73 A</text><text x="2252.400" y="1568" class="e">35.3 A</text><text x="2339.600" y="1568" class="e">0.987 A</text>
<text x="2099" y="1603" class="e">14.2 V</text><text x="2175.500" y="1603" class="e">12.0 V</text><text x="2252.400" y="1603" class="e">14.4 V</text><text x="2339.600" y="1603" class="e">13.5 V</text>

<!-- Temperatures -->
<rect class="p" x="115.500" y="1641.500" width="2250" height="230" rx="3"/>
<text class="t" x="1240" y="1674">Temperatures</text>
<path stroke="#2a2d32" fill="none" d="M250 1715V1838M335 1715V1838M420 1715V1838M506 1715V1838M590.500 1715V1838M676 1715V1838M762 1715V1838M847 1715V1838M932 1715V1838M1018 1715V1838M1103 1715V1838M1187 1715V1838M1273.700 1715V1838M1358.700 1715V1838M1444 1715V1838M1530 1715V1838M1615 1715V1838M1700 1715V1838M209.500 1772.500H1753"/>
<text x="201.600" y="1777" class="e">69 °F</text><text x="201.600" y="1846" class="e">68.5 °F</text>
<text x="1765" y="1732">67.5%</text><text x="1765" y="1790">67%</text><text x="1765" y="1849">66.5%</text>
<circle cx="1605.700" cy="1750.700" r="3.800" fill="#fade2a"/><circle cx="1605.700" cy="1819.700" r="3.800" fill="#8ab8ff"/>
<path fill="none" stroke="#8ab8ff" stroke-width="2" d="M1700 1798L1702 1787L1704 1795L1706 1787H1713L1715 1786L1716 1795L1719 1772L1721 1780L1723 1773L1725 1778L1728 1772H1735L1737 1771L1739 1756L1741 1768L1743 1755L1746 1759L1750 1756H1751"/>
<path fill="none" stroke="#fade2a" stroke-width="1.800" d="M1704 1838L1705 1804H1706L1709 1838M1711 1838L1712 1832L1713 1838"/>
<path stroke="#24272c" fill="none" d="M2106 1736.400H2352M1815 1771H2352M1815 1805H2352"/>
<text class="h" x="2175.500" y="1725">Last *</text><text class="h" x="2257" y="1725">Min</text><text class="h" x="2339" y="1725">Max</text>
<rect x="1827" y="1750" width="21" height="6" rx="1" fill="#73bf69"/><rect x="1827" y="1785" width="21" height="6" rx="1" fill="#fade2a"/><rect x="1827" y="1819" width="21" height="6" rx="1" fill="#8ab8ff"/>
<text x="1859" y="1759">Inside Temperature</text><text x="1859" y="1794">Inside Humidity <tspan class="g">(right y-axis)</tspan></text><text x="1859" y="1828">Outside Temperature</text>
<text x="2175.500" y="1759" class="e">67.6 °F</text><text x="2257" y="1759" class="e">67.0 °F</text><text x="2339" y="1759" class="e">67.6 °F</text>
<text x="2175.500" y="1794" class="e">64.9%</text><text x="2257" y="1794" class="e">64.6%</text><text x="2339" y="1794" class="e">67.3%</text>
<text x="2175.500" y="1828" class="e">69.1 °F</text><text x="2257" y="1828" class="e">68.7 °F</text><text x="2339" y="1828" class="e">69.1 °F</text>

<!-- window border -->
<rect x="0" y="65" width="2" height="1773" fill="#0279d4"/>
<rect x="2387" y="65" width="2" height="1773" fill="#0279d4"/>
<rect x="0" y="1836" width="2389" height="2" fill="#0279d4"/>
</svg>
</body></html>
